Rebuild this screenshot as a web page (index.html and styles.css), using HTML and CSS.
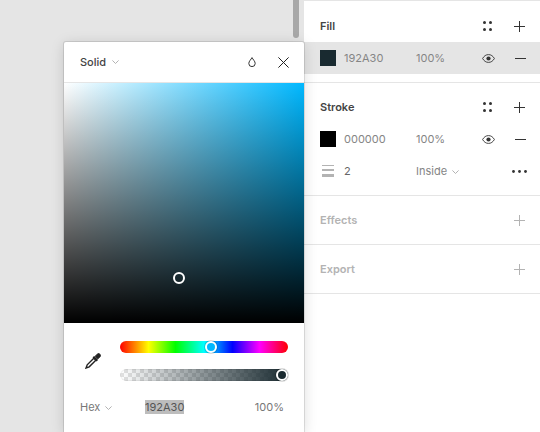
FILE: index.html
```html
<!DOCTYPE html>
<html lang="en">
<head>
    <meta charset="UTF-8">
    <title>Fill picker</title>
    <link rel="stylesheet" href="styles.css">
</head>
<body>
    <div class="app">
        <main class="canvas">
            <div class="scroll-thumb"></div>

            <div class="picker">
                <div class="picker-head">
                    <span class="picker-type">Solid</span>
                    <svg class="chev" width="7" height="4" viewBox="0 0 7 4"><path d="M.4.4 3.500 3.500 6.600.4" fill="none" stroke="#aaa" stroke-width=".9"/></svg>
                    <svg class="drop" width="8" height="10" viewBox="0 0 8 10"><path d="M4 .6C3.200 2.300 .8 4.300 .8 6.500a3.200 3.100 0 0 0 6.400 0C7.200 4.300 4.800 2.300 4 .6Z" fill="none" stroke="#333"/></svg>
                    <svg class="close" width="11" height="11" viewBox="0 0 11 11"><path d="M.4.4 10.600 10.600M10.600.4.400 10.600" stroke="#222"/></svg>
                </div>
                <div class="sb-square">
                    <div class="sb-thumb"></div>
                </div>
                <div class="sliders">
                    <svg class="dropper" width="16" height="16" viewBox="0 0 16 16">
                        <path d="M8.300 3.700 12.300 7.700" stroke="#222" stroke-width="2"/>
                        <path d="M10 3.500 12.200 1.200a1.900 1.900 0 0 1 2.700 2.700L12.500 6.100Z" fill="#222" stroke="#222"/>
                        <path d="M8.800 5.200 2.200 11.800 1 15l3.200-1.200 6.600-6.600Z" fill="#fff" stroke="#222" stroke-width="1.400"/>
                    </svg>
                    <div class="tracks">
                        <div class="track hue"><span class="knob hue-knob"></span></div>
                        <div class="track alpha"><span class="knob alpha-knob"></span></div>
                    </div>
                </div>
                <div class="picker-values">
                    <span class="mode">Hex
                        <svg class="chev" width="7" height="4" viewBox="0 0 7 4"><path d="M.4.4 3.500 3.500 6.600.4" fill="none" stroke="#aaa" stroke-width=".9"/></svg>
                    </span>
                    <span class="hex">192A30</span>
                    <span class="opacity">100%</span>
                </div>
            </div>
        </main>

        <aside class="panel">
            <section class="section fill-section">
                <div class="section-head">
                    <h3>Fill</h3>
                    <svg class="icon styles" width="9" height="10" viewBox="0 0 9 10"><g fill="#333"><circle cx="1.500" cy="1.500" r="1.500"/><circle cx="7.500" cy="1.500" r="1.500"/><circle cx="1.500" cy="8.500" r="1.500"/><circle cx="7.500" cy="8.500" r="1.500"/></g></svg>
                    <svg class="icon plus" width="11" height="11" viewBox="0 0 11 11"><path d="M5.500 0v11M0 5.500h11" stroke="#333"/></svg>
                </div>
                <div class="row selected">
                    <span class="swatch" style="background:#192a30"></span>
                    <span class="color-value">192A30</span>
                    <span class="pct">100%</span>
                    <svg class="eye" width="13" height="9" viewBox="0 0 13 9"><path d="M.6 4.500C2 2 4 .6 6.500.6S11 2 12.400 4.500C11 7 9 8.400 6.500 8.400S2 7 .6 4.500Z" fill="none" stroke="#333" stroke-width=".9"/><circle cx="6.500" cy="4.500" r="2.100" fill="#333"/></svg>
                    <svg class="minus" width="11" height="1" viewBox="0 0 11 1"><path d="M0 .5h11" stroke="#333"/></svg>
                </div>
            </section>

            <section class="section stroke-section">
                <div class="section-head">
                    <h3>Stroke</h3>
                    <svg class="icon styles" width="9" height="10" viewBox="0 0 9 10"><g fill="#333"><circle cx="1.500" cy="1.500" r="1.500"/><circle cx="7.500" cy="1.500" r="1.500"/><circle cx="1.500" cy="8.500" r="1.500"/><circle cx="7.500" cy="8.500" r="1.500"/></g></svg>
                    <svg class="icon plus" width="11" height="11" viewBox="0 0 11 11"><path d="M5.500 0v11M0 5.500h11" stroke="#333"/></svg>
                </div>
                <div class="row">
                    <span class="swatch" style="background:#000"></span>
                    <span class="color-value">000000</span>
                    <span class="pct">100%</span>
                    <svg class="eye" width="13" height="9" viewBox="0 0 13 9"><path d="M.6 4.500C2 2 4 .6 6.500.6S11 2 12.400 4.500C11 7 9 8.400 6.500 8.400S2 7 .6 4.500Z" fill="none" stroke="#333" stroke-width=".9"/><circle cx="6.500" cy="4.500" r="2.100" fill="#333"/></svg>
                    <svg class="minus" width="11" height="1" viewBox="0 0 11 1"><path d="M0 .5h11" stroke="#333"/></svg>
                </div>
                <div class="row weight-row">
                    <svg class="weight-icon" width="12" height="12" viewBox="0 0 12 12"><path d="M0 0h12v1H0zM0 4h12v2H0zM0 9h12v3H0z" fill="#b3b3b3"/></svg>
                    <span class="weight">2</span>
                    <span class="align">Inside
                        <svg class="chev" width="7" height="4" viewBox="0 0 7 4"><path d="M.4.4 3.500 3.500 6.600.4" fill="none" stroke="#aaa" stroke-width=".9"/></svg>
                    </span>
                    <svg class="more" width="15" height="3" viewBox="0 0 15 3"><g fill="#333"><circle cx="1.500" cy="1.500" r="1.400"/><circle cx="7.500" cy="1.500" r="1.400"/><circle cx="13.500" cy="1.500" r="1.400"/></g></svg>
                </div>
            </section>

            <section class="section empty-section">
                <div class="section-head">
                    <h3>Effects</h3>
                    <svg class="icon plus" width="11" height="11" viewBox="0 0 11 11"><path d="M5.500 0v11M0 5.500h11" stroke="#b3b3b3"/></svg>
                </div>
            </section>

            <section class="section empty-section">
                <div class="section-head">
                    <h3>Export</h3>
                    <svg class="icon plus" width="11" height="11" viewBox="0 0 11 11"><path d="M5.500 0v11M0 5.500h11" stroke="#b3b3b3"/></svg>
                </div>
            </section>
        </aside>
    </div>
</body>
</html>
```

FILE: styles.css
```css
* {
    box-sizing: border-box;
}

html, body {
    margin: 0;
    height: 100%;
    overflow: hidden;
}

body {
    font-family: Inter, "Noto Sans", sans-serif;
    font-size: 11px;
    color: #333;
    background: #e5e5e5;
}

.app {
    display: flex;
    height: 432px;
}

.canvas {
    position: relative;
    width: 304px;
    flex: none;
}

.scroll-thumb {
    position: absolute;
    left: 293px;
    top: -6px;
    width: 6px;
    height: 44px;
    border-radius: 3px;
    background: #a8a8a8;
}

/* picker floats over the canvas */
.picker {
    position: absolute;
    left: 64px;
    top: 42px;
    width: 240px;
    height: 390px;
    background: #fff;
    border-radius: 2px 2px 0 0;
    box-shadow: 0 0 0 1px rgba(0, 0, 0, .1), 0 2px 14px rgba(0, 0, 0, .15);
    z-index: 2;
}

.picker-head {
    display: flex;
    align-items: center;
    height: 41px;
    padding: 0 15px 0 16px;
    border-bottom: 1px solid #e5e5e5;
}

.picker-type {
    font-weight: 500;
    color: #444;
}

.picker-head .chev {
    margin-left: 6px;
}

.drop {
    margin-left: auto;
    margin-right: 22px;
}

.sb-square {
    position: relative;
    height: 240px;
    background:
        linear-gradient(to bottom, rgba(0, 0, 0, 0), #000),
        linear-gradient(to right, #fff, #00b8ff);
}

.sb-thumb {
    position: absolute;
    left: 109px;
    top: 189px;
    width: 12px;
    height: 12px;
    border: 2px solid #fff;
    border-radius: 50%;
}

.sliders {
    display: flex;
    align-items: center;
    padding: 18px 16px 0 21px;
}

.dropper {
    flex: none;
    margin-right: 19px;
}

.tracks {
    display: flex;
    flex-direction: column;
    gap: 16px;
    flex: 1;
}

.track {
    position: relative;
    height: 12px;
    border-radius: 6px;
}

.hue {
    background: linear-gradient(to right, #f00 0%, #ff0 17%, #0f0 33%, #0ff 50%, #00f 67%, #f0f 83%, #f00 100%);
}

.alpha {
    background:
        linear-gradient(to right, rgba(25, 42, 48, 0), #192a30),
        repeating-conic-gradient(#e2e2e2 0 25%, #fff 0 50%) 0 0 / 8px 8px;
    box-shadow: inset 0 0 0 1px rgba(0, 0, 0, .06);
}

.knob {
    position: absolute;
    top: 0;
    width: 12px;
    height: 12px;
    border-radius: 50%;
    border: 2px solid #fff;
    box-shadow: 0 0 0 1px rgba(0, 0, 0, .15);
}

.hue-knob {
    left: 85px;
    background: #00b8ff;
}

.alpha-knob {
    right: 0;
    background: #192a30;
}

.picker-values {
    display: flex;
    align-items: center;
    height: 18px;
    margin-top: 17px;
    padding: 0 20px 0 16px;
    color: #777;
}

.mode {
    width: 65px;
    flex: none;
}

.mode .chev {
    margin-left: 2px;
    vertical-align: 1px;
}

.hex {
    background: #bdbdbd;
    color: #555;
    line-height: 14px;
}

.opacity {
    margin-left: auto;
}

/* right hand panel */
.panel {
    width: 236px;
    flex: none;
    background: #fff;
    padding-top: 1px;
    border-top: 1px solid #e5e5e5;
}

.section {
    border-bottom: 1px solid #e5e5e5;
}

.section-head {
    display: flex;
    align-items: center;
    height: 48px;
    padding: 0 15px 0 16px;
}

.section-head h3 {
    flex: 1;
    margin: 0;
    font-size: 11px;
    font-weight: 600;
    color: #444;
}

.section-head .styles {
    margin-right: 22px;
}

.fill-section {
    height: 81px;
}

.fill-section .section-head,
.stroke-section .section-head {
    height: 40px;
    padding-top: 8px;
}

.stroke-section {
    height: 113px;
}

.empty-section {
    height: 49px;
}

.empty-section h3 {
    color: #b3b3b3;
}

.row {
    display: flex;
    align-items: center;
    height: 32px;
    padding: 0 15px 0 16px;
    color: #858585;
}

.row.selected {
    background: #e5e5e5;
}

.swatch {
    width: 16px;
    height: 16px;
    flex: none;
}

.color-value {
    width: 72px;
    margin-left: 8px;
    flex: none;
}

.pct {
    width: 66px;
    flex: none;
}

.eye {
    flex: none;
    margin-right: 20px;
}

.minus {
    flex: none;
}

.weight-row {
    padding-right: 13px;
}

.weight-icon {
    flex: none;
    margin-left: 2px;
}

.weight {
    width: 72px;
    margin-left: 10px;
    color: #666;
    flex: none;
}

.align .chev {
    margin-left: 2px;
    vertical-align: 1px;
}

.more {
    margin-left: auto;
}
```
